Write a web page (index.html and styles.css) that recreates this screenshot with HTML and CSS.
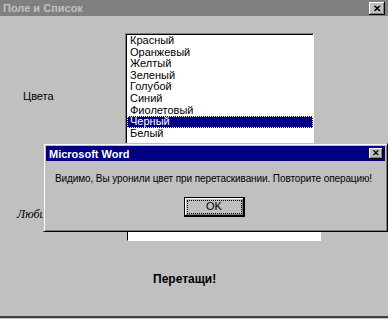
FILE: index.html
```html
<!DOCTYPE html>
<html lang="ru">
<head>
    <meta charset="UTF-8">
    <title>Поле и Список</title>
    <link rel="stylesheet" href="styles.css">
</head>
<body>
    <div class="window">
        <div class="titlebar inactive">
            <span class="title">Поле и Список</span>
            <span class="close-btn">&#x2715;</span>
        </div>

        <div class="content">
            <!-- List row -->
            <div class="row row-list">
                <div class="label">Цвета</div>
                <div class="listbox">
                    <div class="item">Красный</div>
                    <div class="item">Оранжевый</div>
                    <div class="item">Желтый</div>
                    <div class="item">Зеленый</div>
                    <div class="item">Голубой</div>
                    <div class="item">Синий</div>
                    <div class="item">Фиолетовый</div>
                    <div class="item selected">Черный</div>
                    <div class="item">Белый</div>
                </div>
            </div>

            <!-- Field row -->
            <div class="row row-field">
                <div class="label label-fav">Любимый цвет</div>
                <div class="field"></div>
            </div>

            <div class="drag">Перетащи!</div>
        </div>

        <!-- Message box -->
        <div class="msgbox">
            <div class="titlebar active">
                <span class="title">Microsoft Word</span>
                <span class="close-btn">&#x2715;</span>
            </div>
            <p class="message">Видимо, Вы уронили цвет при перетаскивании. Повторите операцию!</p>
            <div class="buttons">
                <button class="ok-btn"><span>OK</span></button>
            </div>
        </div>
    </div>
</body>
</html>
```

FILE: styles.css
```css
/* General */
body, html {
    margin: 0;
    padding: 0;
    background: #c0c0c0;
    font-family: "Liberation Sans", Arial, sans-serif;
    font-size: 11px;
    color: #000;
}

.window {
    position: relative;
    width: 388px;
    height: 318px;
    border-bottom: 2px solid #404040;
    box-sizing: border-box;
    overflow: hidden;
}

/* Title bars */
.titlebar {
    display: flex;
    justify-content: space-between;
    align-items: center;
    height: 16px;
    padding: 0 3px 0 3px;
    font-weight: bold;
}

.titlebar.inactive {
    background: #808080;
    color: #c0c0c0;
}

.titlebar.active {
    background: #000080;
    color: #fff;
    height: 15px;
    padding-left: 3px;
    padding-right: 2px;
}

.close-btn {
    width: 14px;
    height: 11px;
    background: #c0c0c0;
    color: #000;
    font-size: 9px;
    line-height: 11px;
    text-align: center;
    box-shadow: inset -1px -1px 0 #000, inset 1px 1px 0 #fff, inset -2px -2px 0 #808080;
}

.titlebar.inactive .close-btn {
    width: 16px;
    height: 13px;
    line-height: 13px;
    font-size: 10px;
}

/* Content */
.content {
    display: flex;
    flex-direction: column;
}

.row {
    display: flex;
    align-items: center;
}

.row-list {
    margin-top: 17px;
}

.label {
    width: 125px;
    padding-left: 23px;
    box-sizing: border-box;
}

.listbox {
    width: 189px;
    height: 126px;
    background: #fff;
    border-top: 1px solid #808080;
    border-left: 1px solid #808080;
    border-right: 1px solid #fff;
    border-bottom: 1px solid #fff;
    box-shadow: inset 1px 1px 0 #000;
    box-sizing: border-box;
    padding: 1px 0 0 1px;
}

.item {
    height: 11.6px;
    line-height: 11.6px;
    padding-left: 3px;
}

.item.selected {
    background: #000080;
    color: #fff;
    outline: 1px dotted #ffff80;
    outline-offset: -1px;
}

.row-field {
    margin-top: 39px;
    align-items: flex-start;
}

.label-fav {
    padding-left: 17px;
    padding-top: 9px;
    font-family: "Liberation Serif", serif;
    font-style: italic;
    font-size: 12px;
}

.field {
    width: 194px;
    height: 43px;
    margin-left: 2px;
    background: #fff;
    border-top: 1px solid #808080;
    border-left: 1px solid #000;
    border-right: 1px solid #fff;
    border-bottom: 1px solid #fff;
    box-sizing: border-box;
}

.drag {
    margin-top: 31px;
    padding-left: 153px;
    font-weight: bold;
    font-size: 12px;
}

/* Message box */
.msgbox {
    position: absolute;
    left: 43px;
    top: 143px;
    width: 345px;
    height: 89px;
    background: #c0c0c0;
    box-sizing: border-box;
    padding: 2px;
    border-top: 1px solid #c0c0c0;
    border-left: 1px solid #c0c0c0;
    border-right: 1px solid #000;
    border-bottom: 1px solid #000;
    box-shadow: inset 1px 1px 0 #fff, inset -1px -1px 0 #808080;
}

.message {
    margin: 12px 0 0 0;
    padding-left: 9px;
    font-size: 10px;
    letter-spacing: -0.1px;
    white-space: nowrap;
}

.buttons {
    display: flex;
    justify-content: center;
    margin-top: 13px;
    padding-right: 3px;
}

.ok-btn {
    width: 61px;
    height: 20px;
    padding: 3px;
    background: #c0c0c0;
    border: 1px solid #000;
    box-shadow: inset -1px -1px 0 #000, inset 1px 1px 0 #fff, inset -2px -2px 0 #808080;
    font-family: "Liberation Sans", Arial, sans-serif;
    font-size: 11px;
    color: #000;
}

.ok-btn span {
    display: block;
    height: 100%;
    line-height: 10px;
    outline: 1px dotted #000;
}
```
